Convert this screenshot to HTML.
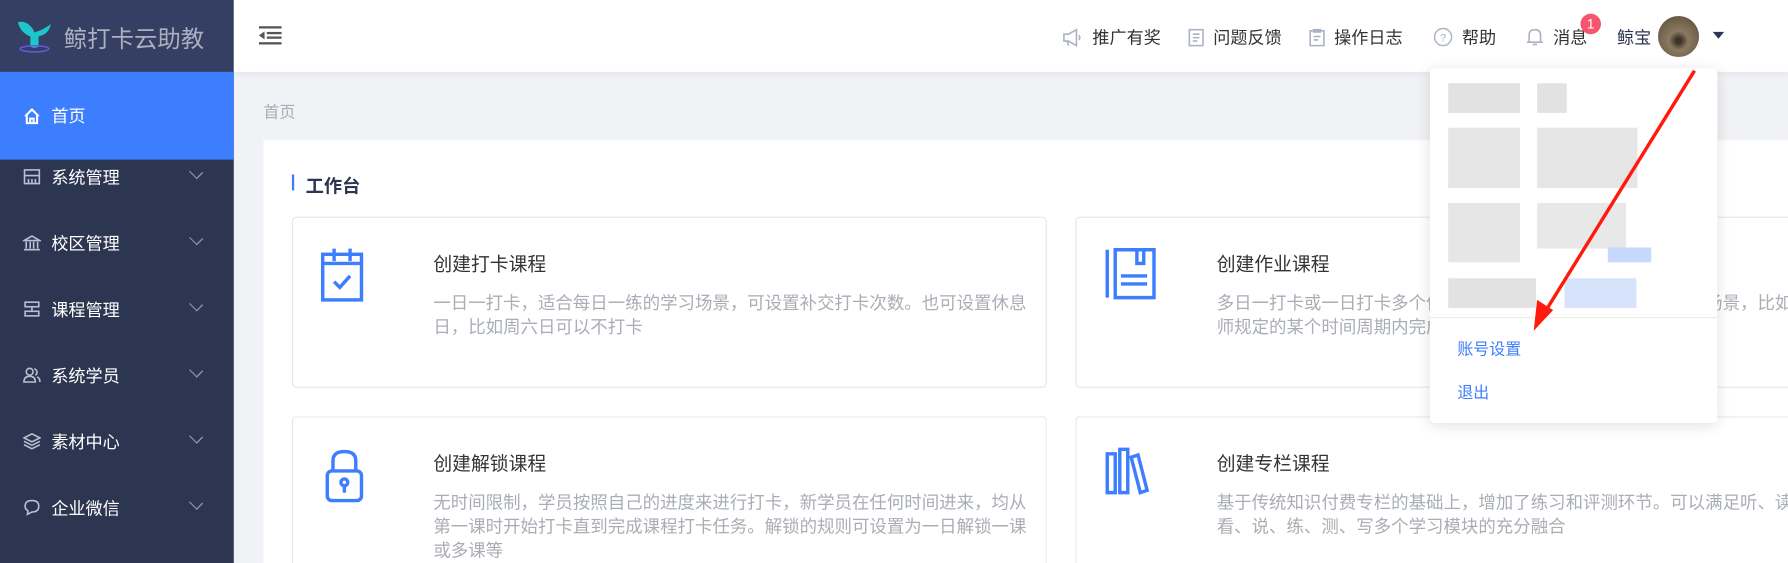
<!DOCTYPE html>
<html><head><meta charset="utf-8"><style>
*{margin:0;padding:0;box-sizing:border-box}
html,body{width:1788px;height:563px;overflow:hidden}
body{background:#f0f2f5;font-family:"Liberation Sans","Noto Sans CJK SC",sans-serif;position:relative}
#w{position:absolute;left:0;top:0;width:1568px;height:494px;transform:scale(1.14031);transform-origin:0 0;overflow:hidden;background:#f0f2f5}
.side{position:absolute;left:0;top:0;width:205px;height:494px;background:#2d3651}
.logo{height:63px;background:#343f63;display:flex;align-items:center;padding-left:14px;color:#aab0bd;font-size:20.5px}
.mi{position:absolute;left:0;width:205px;height:58px;display:flex;align-items:center;color:#fff;font-size:15px;padding-left:20px}
.mi svg{margin-right:9px}
.mi .ar{position:absolute;left:168px;top:21px;width:8px;height:8px;border-right:1px solid #8a93aa;border-bottom:1px solid #8a93aa;transform:rotate(45deg) scaleX(1.2)}
.hdr{position:absolute;left:205px;top:0;right:0;height:63px;background:#fff;box-shadow:0 2px 6px rgba(0,0,0,.06)}
.ht{position:absolute;top:22px;font-size:15px;color:#333;display:flex;align-items:center}
.ht svg{margin-right:8px}
.main{position:absolute;left:231px;top:123px;right:0;bottom:0;background:#fff}
.card{position:absolute;border:1px solid #e4e7ee;border-radius:4px;background:#fff}
.ct{position:absolute;left:123px;top:27px;font-size:16.5px;color:#333}
.cd{position:absolute;left:123px;top:65px;font-size:15.3px;color:#a9adb5;line-height:21px;width:535px}
.dd{position:absolute;left:1254px;top:60px;width:252px;height:311px;background:#fff;border-radius:4px;box-shadow:0 2px 12px rgba(0,0,0,.12)}
.bl{position:absolute;background:#e2e2e2}
</style></head><body><div id="w">
<div class="side">
 <div class="logo"><svg width="36" height="34" viewBox="0 0 40 36"><path d="M2 4 Q10 2 16 10 L18 14 Q26 12 34 6 Q32 16 22 18 L22 28 Q18 30 14 28 L14 18 Q4 14 2 4Z" fill="#1dc7c9"/><ellipse cx="18" cy="30" rx="14" ry="3" fill="none" stroke="#6a56e0" stroke-width="1.5"/></svg><span style="margin-left:6px">鲸打卡云助教</span></div>
 <div class="mi" style="top:63px;height:77px;background:#3d7eff"><svg width="16" height="16" viewBox="0 0 16 16" fill="none" stroke="#fff" stroke-width="1.8"><path d="M2 8 L8 2 L14 8 M3.5 7 V14 H12.5 V7 M6.5 14 V10 H9.5 V14"/></svg>首页</div>
 <div class="mi" style="top:126px"><svg width="16" height="16" viewBox="0 0 16 16" fill="none" stroke="#b8bfd0" stroke-width="1.4"><rect x="1.5" y="2" width="13" height="12"/><path d="M1.5 7 H14.5 M5 10 V14 M8 10 V14 M11 10 V14"/></svg>系统管理<span class="ar"></span></div>
 <div class="mi" style="top:184px"><svg width="16" height="16" viewBox="0 0 16 16" fill="none" stroke="#b8bfd0" stroke-width="1.4"><path d="M1 6 L8 2 L15 6 Z M3 7 V13 M6.5 7 V13 M9.5 7 V13 M13 7 V13 M1 14 H15"/></svg>校区管理<span class="ar"></span></div>
 <div class="mi" style="top:242px"><svg width="16" height="16" viewBox="0 0 16 16" fill="none" stroke="#b8bfd0" stroke-width="1.4"><rect x="2" y="2" width="12" height="4"/><rect x="2" y="10" width="12" height="4"/><path d="M8 6 V10"/></svg>课程管理<span class="ar"></span></div>
 <div class="mi" style="top:300px"><svg width="16" height="16" viewBox="0 0 16 16" fill="none" stroke="#b8bfd0" stroke-width="1.4"><circle cx="6" cy="5" r="3"/><path d="M1 14 Q1 9 6 9 Q11 9 11 14 Z M10 2.5 A3 3 0 0 1 11 8 M12.5 9.5 Q15 10.5 15 14"/></svg>系统学员<span class="ar"></span></div>
 <div class="mi" style="top:358px"><svg width="16" height="16" viewBox="0 0 16 16" fill="none" stroke="#b8bfd0" stroke-width="1.4"><path d="M8 1.5 L15 5 L8 8.5 L1 5 Z M1 8 L8 11.5 L15 8 M1 11 L8 14.5 L15 11"/></svg>素材中心<span class="ar"></span></div>
 <div class="mi" style="top:416px"><svg width="16" height="16" viewBox="0 0 16 16" fill="none" stroke="#b8bfd0" stroke-width="1.4"><path d="M8 2 Q14 2 14 7 Q14 12 8 12 L4 14 L4.5 11 Q2 9.5 2 7 Q2 2 8 2Z"/></svg>企业微信<span class="ar"></span></div>
</div>
<div class="hdr">
 <svg style="position:absolute;left:22px;top:22px" width="20" height="17" viewBox="0 0 20 17" fill="#555"><rect x="0" y="1" width="20" height="2"/><rect x="7" y="6" width="13" height="2"/><rect x="7" y="10" width="13" height="2"/><rect x="0" y="15" width="20" height="2"/><path d="M0 9 L5 5.5 V12.5Z"/></svg>
 <div class="ht" style="left:727px"><svg width="18" height="16" viewBox="0 0 18 16" fill="none" stroke="#aab2c3" stroke-width="1.4"><path d="M1 5 H5 L12 1 V15 L5 11 H1 Z M14 6 Q16 8 14 10 M4 11 L5 15"/></svg>推广有奖</div>
 <div class="ht" style="left:837px"><svg width="14" height="16" viewBox="0 0 14 16" fill="none" stroke="#aab2c3" stroke-width="1.4"><path d="M1 1 H13 V15 H1 Z M4 5 H10 M4 8 H10 M4 11 H8"/></svg>问题反馈</div>
 <div class="ht" style="left:943px"><svg width="14" height="16" viewBox="0 0 14 16" fill="none" stroke="#aab2c3" stroke-width="1.4"><path d="M1 2 H13 V15 H1 Z M4 1 H10 V3 H4 Z M4 7 H10 M4 10 H8"/></svg>操作日志</div>
 <div class="ht" style="left:1052px"><svg width="17" height="17" viewBox="0 0 17 17" fill="none" stroke="#aab2c3" stroke-width="1.3"><circle cx="8.5" cy="8.5" r="7.5"/><text x="8.5" y="12.5" font-size="10" text-anchor="middle" fill="#aab2c3" stroke="none" font-family="Liberation Sans">?</text></svg>帮助</div>
 <div class="ht" style="left:1133px"><svg width="16" height="17" viewBox="0 0 16 17" fill="none" stroke="#aab2c3" stroke-width="1.4"><path d="M3 13 V7 Q3 2 8 2 Q13 2 13 7 V13 H1 H15 M6 15 H10"/></svg>消息</div>
 <div style="position:absolute;left:1181px;top:12px;width:18px;height:18px;border-radius:50%;background:#f5566e;color:#fff;font-size:12px;text-align:center;line-height:18px">1</div>
 <div class="ht" style="left:1213px;color:#2d3651">鲸宝</div>
 <div style="position:absolute;left:1249px;top:14px;width:36px;height:36px;border-radius:50%;background:radial-gradient(circle at 50% 60%,#3b3328 8%,#8b7a60 30%,#6b5d48 70%);"></div>
 <div style="position:absolute;left:1297px;top:28px;border:5px solid transparent;border-top:6px solid #2d3651"></div>
</div>
<div style="position:absolute;left:231px;top:88px;font-size:14px;color:#a9adb5">首页</div>
<div class="main">
 <div style="position:absolute;left:25px;top:30px;width:2px;height:14px;background:#3d7eff"></div>
 <div style="position:absolute;left:37px;top:27px;font-size:16px;font-weight:bold;color:#2d3651">工作台</div>
</div>
<div class="card" style="left:256px;top:190px;width:662px;height:150px">
 <svg style="position:absolute;left:24px;top:26px" width="38" height="48" viewBox="0 0 38 48" fill="none" stroke="#3d7eff" stroke-width="3"><rect x="2" y="6" width="34" height="40"/><path d="M2 14 H36 M12 1 V12 M26 1 V12 M12 30 L17 35 L26 25"/></svg>
 <div class="ct">创建打卡课程</div>
 <div class="cd">一日一打卡，适合每日一练的学习场景，可设置补交打卡次数。也可设置休息日，比如周六日可以不打卡</div>
</div>
<div class="card" style="left:943px;top:190px;width:900px;height:150px">
 <svg style="position:absolute;left:24px;top:24px" width="48" height="50" viewBox="0 0 48 50" fill="none" stroke="#3d7eff" stroke-width="3"><path d="M3 4 V46 M10 4 H44 V46 H10 Z M29 4 V16 H35 V4 M15 27 H38 M15 34 H38"/></svg>
 <div class="ct">创建作业课程</div>
 <div class="cd">多日一打卡或一日打卡多个作业，适合每隔一段时间打卡一次的场景，比如老师规定的某个时间周期内完成一次打卡</div>
</div>
<div class="card" style="left:256px;top:365px;width:662px;height:129px;border-bottom:none;border-radius:4px 4px 0 0">
 <svg style="position:absolute;left:28px;top:28px" width="34" height="48" viewBox="0 0 34 48" fill="none" stroke="#3d7eff" stroke-width="3"><path d="M7 19 V10 Q7 2 17 2 Q27 2 27 10 V19"/><rect x="2" y="19" width="30" height="26" rx="4"/><circle cx="17" cy="29" r="3"/><path d="M17 32 V38"/></svg>
 <div class="ct">创建解锁课程</div>
 <div class="cd">无时间限制，学员按照自己的进度来进行打卡，新学员在任何时间进来，均从第一课时开始打卡直到完成课程打卡任务。解锁的规则可设置为一日解锁一课或多课等</div>
</div>
<div class="card" style="left:943px;top:365px;width:900px;height:129px;border-bottom:none;border-radius:4px 4px 0 0">
 <svg style="position:absolute;left:24px;top:24px" width="44" height="44" viewBox="0 0 44 44" fill="none" stroke="#3d7eff" stroke-width="3"><path d="M3 8 H10 V42 H3 Z M14 4 H21 V42 H14 Z M24 11 L30 9 L38 40 L32 42 Z"/></svg>
 <div class="ct">创建专栏课程</div>
 <div class="cd">基于传统知识付费专栏的基础上，增加了练习和评测环节。可以满足听、读、看、说、练、测、写多个学习模块的充分融合</div>
</div>
<div class="dd">
 <div class="bl" style="left:16px;top:13px;width:63px;height:26px"></div><div class="bl" style="left:94px;top:13px;width:26px;height:26px"></div>
 <div class="bl" style="left:16px;top:52px;width:63px;height:53px;background:#e6e6e6"></div><div class="bl" style="left:94px;top:52px;width:88px;height:53px;background:#e6e6e6"></div>
 <div class="bl" style="left:16px;top:118px;width:63px;height:52px;background:#e6e6e6"></div><div class="bl" style="left:94px;top:118px;width:78px;height:40px;background:#e8e8e8"></div>
 <div class="bl" style="left:156px;top:157px;width:38px;height:13px;background:#c6d8fb"></div>
 <div class="bl" style="left:16px;top:184px;width:77px;height:26px"></div><div class="bl" style="left:118px;top:184px;width:63px;height:26px;background:#d6e3fb"></div>
 <div style="position:absolute;left:0;right:0;top:218px;height:1px;background:#ececec"></div>
</div>
<div style="position:absolute;left:1278px;top:296px;font-size:14px;color:#3d7eff">账号设置</div>
<div style="position:absolute;left:1278px;top:334px;font-size:14px;color:#3d7eff">退出</div>
<svg style="position:absolute;left:0;top:0" width="1568" height="494"><path d="M1486 62 L1354 275" stroke="#ff1a0d" stroke-width="3"/><path d="M1345 290 L1348 263 L1362 272 Z" fill="#ff1a0d"/></svg>
</div></body></html>
